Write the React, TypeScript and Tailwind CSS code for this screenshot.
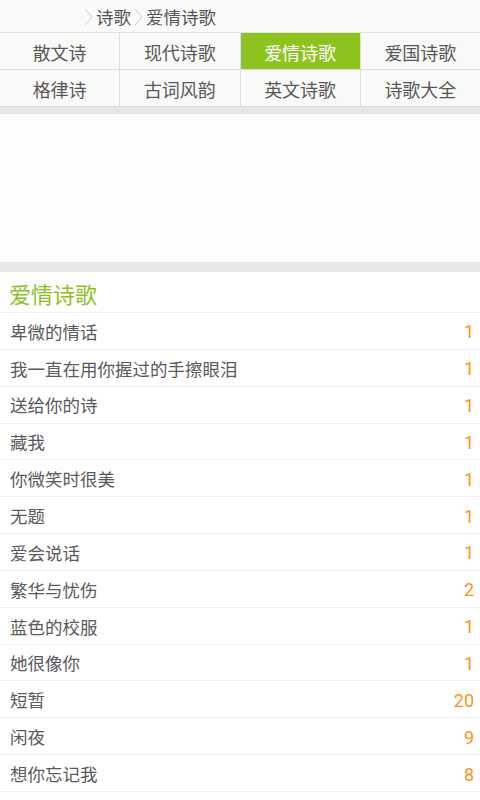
const tabs = ["散文诗", "现代诗歌", "爱情诗歌", "爱国诗歌", "格律诗", "古词风韵", "英文诗歌", "诗歌大全"];

const poems: [string, number][] = [
  ["卑微的情话", 1],
  ["我一直在用你握过的手擦眼泪", 1],
  ["送给你的诗", 1],
  ["藏我", 1],
  ["你微笑时很美", 1],
  ["无题", 1],
  ["爱会说话", 1],
  ["繁华与忧伤", 2],
  ["蓝色的校服", 1],
  ["她很像你", 1],
  ["短暂", 20],
  ["闲夜", 9],
  ["想你忘记我", 8],
];

const Chevron = () => (
  <svg width="9" height="18" viewBox="0 0 9 18" className="mx-[3px]">
    <polyline points="1,1 8,9 1,17" fill="none" stroke="#d0d0d0" strokeWidth="1" />
  </svg>
);

const App = () => {
  return (
    <div
      className="w-[480px] h-[800px] overflow-hidden bg-[#fdfdfd]"
      style={{ fontFamily: '"Noto Sans CJK SC", "Noto Sans", sans-serif' }}
    >
      <div className="h-[32px] bg-[#fafafa] flex items-center pl-[81px] pt-[2px] text-[17.5px] text-[#555]">
        <Chevron />
        <span>诗歌</span>
        <Chevron />
        <span>爱情诗歌</span>
      </div>
      <div className="grid grid-cols-4 gap-[1px] bg-[#dedede] border-t border-[#e2e2e2]">
        {tabs.map((t, i) => (
          <div
            key={t}
            className={
              i === 2
                ? "h-[36px] flex items-center justify-center pt-[2px] text-[18px] bg-[#8dc21f] text-white"
                : "h-[36px] flex items-center justify-center pt-[2px] text-[18px] bg-[#f9faf8] text-[#585858]"
            }
          >
            {t}
          </div>
        ))}
      </div>
      <div className="h-[8px] bg-[#e6e6e6] border-t border-[#dcdcdc]" />
      <div className="h-[148px] bg-[#fdfdfd]" />
      <div className="h-[10px] bg-[#e8e8e8]" />
      <div className="h-[41px] flex items-center pl-[9px] pt-[3px] text-[22px] text-[#8cc21f] border-b border-[#efefef] bg-white">
        爱情诗歌
      </div>
      <div className="bg-white">
        {poems.map(([title, n]) => (
          <div
            key={title}
            className="h-[36.85px] flex items-center justify-between pl-[10px] pr-[6px] pt-[2px] border-b border-[#efefef]"
          >
            <span className="text-[17.5px] text-[#5a5a5a]">{title}</span>
            <span className="text-[18px] text-[#f7941d] font-['Roboto',sans-serif]">{n}</span>
          </div>
        ))}
      </div>
    </div>
  );
};

export default App;
